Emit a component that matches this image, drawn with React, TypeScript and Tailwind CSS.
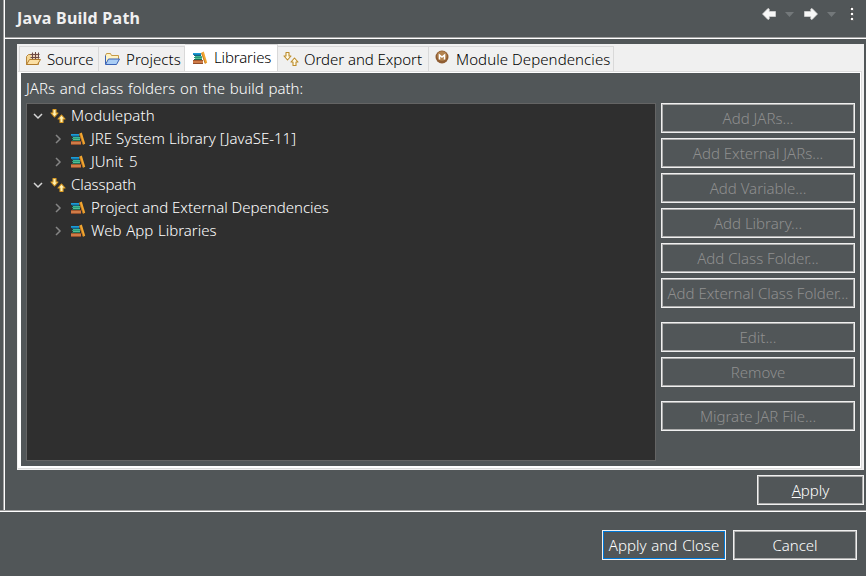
import type { ReactNode } from 'react';
import clsx from 'clsx';

function LibraryIcon() {
  return (
    <svg width="16" height="16" viewBox="0 0 16 16" shapeRendering="crispEdges">
      <path d="M1 3h8v1H1z" fill="#1b9bd8" />
      <path d="M1 4h8v1H1z" fill="#1482b8" />
      <path d="M2 5h7v1H2z" fill="#17607d" />
      <path d="M3 6h7v1H3z" fill="#3fb893" />
      <path d="M2 7h8v1H2z" fill="#2a9b78" />
      <path d="M3 8h7v1H3z" fill="#55bb94" />
      <path d="M2 9h8v1H2z" fill="#1f6d55" />
      <path d="M1 10h10v1H1z" fill="#a3562c" />
      <path d="M1 11h10v2H1z" fill="#cf7c48" />
      <path d="M1 13h10v1H1z" fill="#94502c" />
      <g shapeRendering="auto">
        <path d="M9.200 2.800l2.600-1.200 3.400 11.200-2.200 1z" fill="#f2a630" />
        <path d="M9.500 3l3.700 10.500" stroke="#b9701d" strokeWidth=".8" />
      </g>
    </svg>
  );
}

function PathIcon({ hollow = false }: { hollow?: boolean }) {
  return (
    <svg width="16" height="16" viewBox="0 0 16 16">
      <g fill={hollow ? '#fffbe8' : '#fff3b8'} stroke={hollow ? '#bd8d2c' : '#dc9c22'} strokeWidth="1.100" strokeLinejoin="round">
        <path d="M3 1.500h3v3.500h2L4.500 9 1 5h2z" />
        <path d="M10 14.500h3V11h2l-3.500-4L8 11h2z" />
      </g>
    </svg>
  );
}

function SourceIcon() {
  return (
    <svg width="16" height="16" viewBox="0 0 16 16">
      <path d="M1.500 13.500v-8l2-2h3l1 1h6v9z" fill="#f5d795" stroke="#b8863c" />
      <path d="M6 2.500h7.500v6H6z" fill="#ecd2b5" />
      <path d="M7.500 1.500v7M10.500 1v7.500M13.500 1.500v6M5.500 3.500h9M5.500 6.500h9" stroke="#6e4a45" fill="none" />
      <path d="M1.500 13.500l3-5h11l-3 5z" fill="#fbdfa4" stroke="#b07a2c" />
    </svg>
  );
}

function ProjectsIcon() {
  return (
    <svg width="16" height="16" viewBox="0 0 16 16">
      <path d="M1.500 13V4.500l1-2h4l1 2h7V8" fill="#fff3c4" stroke="#c79a45" />
      <path d="M1.500 4.500V13" stroke="#3a62b5" />
      <path d="M1.500 13.500l3-5.500h11l-3 5.500z" fill="#a9cdf5" stroke="#3a62b5" />
    </svg>
  );
}

function ModuleIcon() {
  return (
    <svg width="14" height="14" viewBox="0 0 14 14">
      <circle cx="7" cy="7" r="6.500" fill="#8f5d33" />
      <circle cx="7" cy="6" r="4.800" fill="#b3834f" />
      <path d="M4.500 9.500V5L7 7l2.500-2v4.500" fill="none" stroke="#fff" strokeWidth="1.500" />
    </svg>
  );
}

function NavArrow({ flip = false }: { flip?: boolean }) {
  return (
    <svg width="14" height="12" viewBox="0 0 14 12" className={clsx(flip && '-scale-x-100')}>
      <path d="M6 .4l1.200.6v2.500h6.300v5H7.200V11l-1.200.6L.5 6z" fill="#f7f7f7" stroke="#d8d8d8" strokeWidth=".7" />
    </svg>
  );
}

function Caret() {
  return (
    <svg width="9" height="5" viewBox="0 0 9 5">
      <path d="M0 0h9L4.500 5z" fill="#73787a" />
    </svg>
  );
}

function Chevron({ open = false }: { open?: boolean }) {
  return (
    <svg width="10" height="10" viewBox="0 0 10 10" fill="none" strokeWidth="1.500">
      {open ? <path d="M1 3l4 4 4-4" stroke="#d6d6d6" /> : <path d="M3 1l4 4-4 4" stroke="#858585" />}
    </svg>
  );
}

const tabs = [
  { name: 'Source', icon: <SourceIcon />, box: 'w-[80px] pl-[5px]', text: 'ml-1.5 tracking-[-0.1px]' },
  { name: 'Projects', icon: <ProjectsIcon />, box: 'w-[86px] pl-[5px]', text: 'ml-1.5 tracking-[0.05px]' },
  { name: 'Libraries', icon: <LibraryIcon />, box: 'w-[93px] pl-[7px]', text: 'ml-1.5 -mt-0.5 tracking-[-0.15px]' },
  { name: 'Order and Export', icon: <PathIcon hollow />, box: 'w-[151px] pl-[5px]', text: 'ml-[5px] tracking-[-0.05px]' },
  { name: 'Module Dependencies', icon: <ModuleIcon />, box: 'w-[185px] pl-1.5 [&>svg]:-mt-1', text: 'ml-[7px] tracking-[0.08px]' },
];

const tree = [
  { name: 'Modulepath', root: true, text: 'tracking-[0.1px]' },
  { name: 'JRE System Library [JavaSE-11]', root: false, text: '' },
  { name: 'JUnit 5', root: false, text: '[word-spacing:2px]' },
  { name: 'Classpath', root: true, text: 'tracking-[-0.1px]' },
  { name: 'Project and External Dependencies', root: false, text: '' },
  { name: 'Web App Libraries', root: false, text: '[word-spacing:0.8px]' },
];

const actions = [
  { name: 'Add JARs...', gap: '' },
  { name: 'Add External JARs...', gap: 'mt-[5px]' },
  { name: 'Add Variable...', gap: 'mt-[5px]' },
  { name: 'Add Library...', gap: 'mt-[5px]' },
  { name: 'Add Class Folder...', gap: 'mt-[5px]' },
  { name: 'Add External Class Folder...', gap: 'mt-[5px]' },
  { name: 'Edit...', gap: 'mt-[14px]' },
  { name: 'Remove', gap: 'mt-[5px]' },
  { name: 'Migrate JAR File...', gap: 'mt-[14px]' },
];

function Button({ children, className, primary, disabled }: { children: ReactNode; className?: string; primary?: boolean; disabled?: boolean }) {
  return (
    <button disabled={disabled} className={clsx('block h-[30px] shrink-0 border border-[#f0f0f0]', className)}>
      <span
        className={clsx(
          'flex h-full items-center justify-center border whitespace-pre',
          primary ? 'border-[#0078d7]' : 'border-[#adadad]',
          disabled ? 'text-[#8f8f8f]' : 'text-white [word-spacing:1px]'
        )}
      >
        {children}
      </span>
    </button>
  );
}

export default function App() {
  return (
    <div className="flex h-[576px] w-[866px] flex-col overflow-hidden bg-[#515658] font-['Noto_Sans',sans-serif] text-[15px] leading-5 font-[350] text-white">
      <div className="flex h-[510px] pl-[3px]">
        <div className="w-0.5 shrink-0 border-r border-l border-r-white border-l-[#a0a0a0]" />
        <main className="flex w-[861px] flex-col">
          <header className="flex h-[37px] shrink-0 items-start justify-between pt-2 pl-3 pr-[11px]">
            <h1 className="text-[16px] font-bold tracking-[0.25px] text-[#f0f0f0]">Java Build Path</h1>
            <div className="flex h-3 items-center">
              <NavArrow />
              <span className="ml-[9px]"><Caret /></span>
              <span className="ml-[10px]"><NavArrow flip /></span>
              <span className="ml-[9px]"><Caret /></span>
              <svg width="6" height="14" viewBox="0 0 6 14" className="ml-[13px]" fill="#fff" stroke="#333" strokeWidth=".6">
                <rect x="1.500" y="0.500" width="3" height="3" />
                <rect x="1.500" y="5.500" width="3" height="3" />
                <rect x="1.500" y="10.500" width="3" height="3" />
              </svg>
            </div>
          </header>
          <div className="h-0.5 shrink-0 border-t border-b border-t-[#a0a0a0] border-b-white" />

          <section className="mt-[5px] ml-3 flex h-[426px] w-[847px] flex-col bg-[#f0f0f0]">
            <div className="flex h-[27px] shrink-0 items-end pl-0.5 text-black">
              {tabs.map((tab) => {
                const active = tab.name === 'Libraries';
                return (
                  <div
                    key={tab.name}
                    className={clsx(
                      'flex shrink-0 items-center border-t border-r border-[#d9d9d9]',
                      tab.box,
                      active ? 'h-[27px] bg-white' : 'h-[25px]',
                      tab.name === 'Source' && 'border-l'
                    )}
                  >
                    {tab.icon}
                    <span className={clsx('whitespace-nowrap', tab.text)}>{tab.name}</span>
                  </div>
                );
              })}
            </div>
            <div className="mr-0.5 mb-px ml-px flex grow flex-col border-t border-r border-b border-[#dcdcdc] bg-white pt-px pr-px pb-0.5 pl-[3px]">
              <div className="flex grow flex-col bg-[#515658] pl-[5px]">
                <p className="h-[30px] shrink-0 pt-[5px] [word-spacing:0.9px]">JARs and class folders on the build path:</p>
                <div className="flex">
                  <div className="h-[358px] w-[630px] shrink-0 border border-[#646464] bg-[#2f2f2f]">
                    {tree.map((row) => (
                      <div key={row.name} className={clsx('flex h-[23px] items-center', row.root ? 'pl-1.5' : 'pl-[26px]')}>
                        <Chevron open={row.root} />
                        <span className="ml-[7px]">{row.root ? <PathIcon /> : <LibraryIcon />}</span>
                        <span className={clsx('-mt-0.5 ml-[5px] whitespace-nowrap', row.text)}>{row.name}</span>
                      </div>
                    ))}
                  </div>
                  <div className="ml-[5px] flex w-[194px] shrink-0 flex-col">
                    {actions.map((a) => (
                      <Button key={a.name} disabled className={a.gap}>{a.name}</Button>
                    ))}
                  </div>
                </div>
              </div>
            </div>
          </section>

          <div className="flex justify-end pt-[5px] pr-0.5">
            <Button className="w-[107px]"><span><u>A</u>pply</span></Button>
          </div>
        </main>
      </div>
      <div className="h-0.5 shrink-0 border-t border-b border-t-[#a0a0a0] border-b-white" />
      <footer className="flex justify-end gap-[7px] pt-[18px] pr-[9px]">
        <Button primary className="w-[124px]">Apply and Close</Button>
        <Button className="w-[124px]">Cancel</Button>
      </footer>
    </div>
  );
}
